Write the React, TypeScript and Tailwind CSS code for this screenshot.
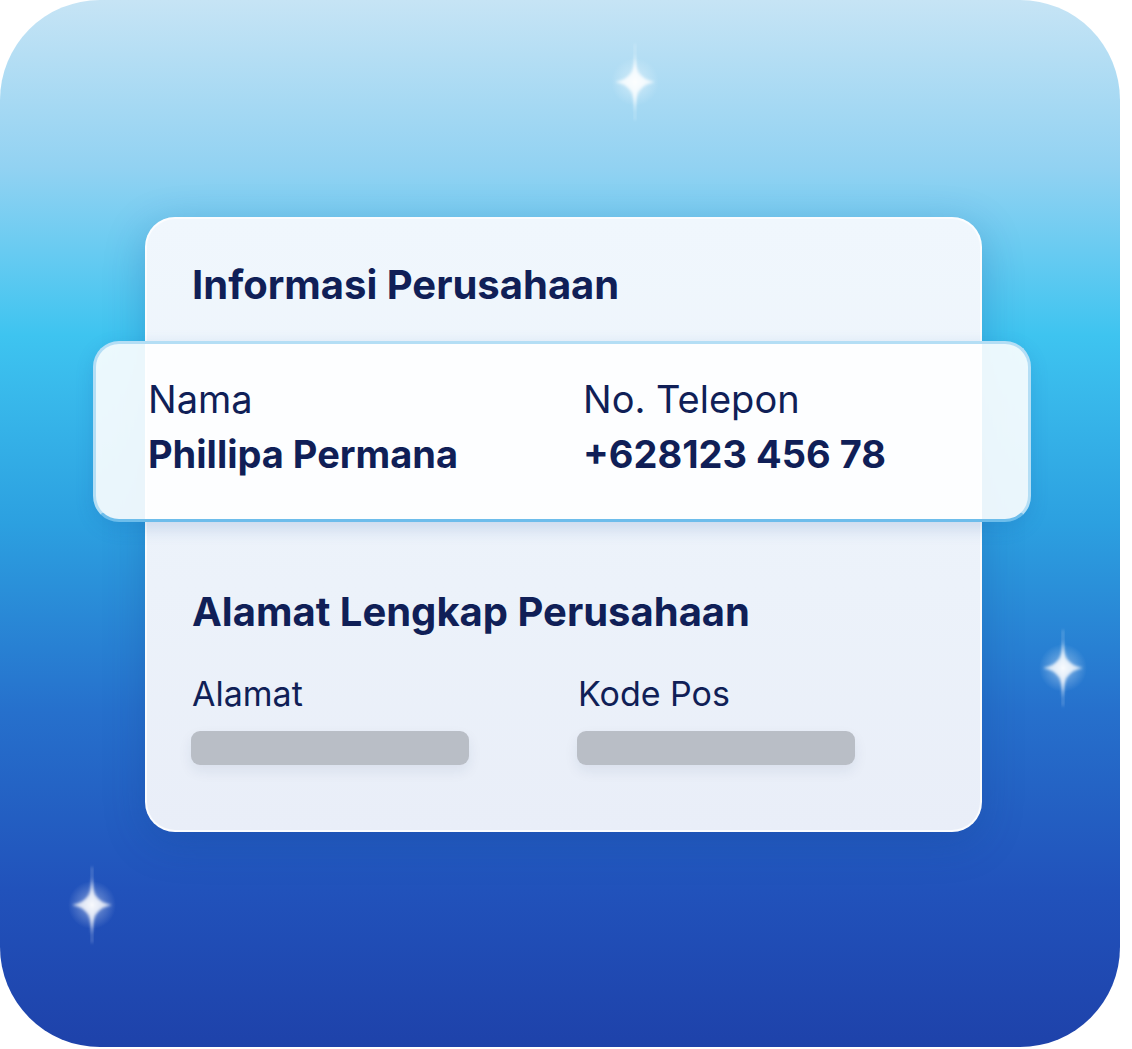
import React from 'react';

function Sparkle({ className, id }: { className: string; id: string }) {
  return (
    <svg className={className} width="80" height="100" viewBox="0 0 80 100" fill="none">
      <defs>
        <radialGradient id={`glow-${id}`} cx="50%" cy="50%" r="50%">
          <stop offset="0%" stopColor="#ffffff" stopOpacity="0.8" />
          <stop offset="45%" stopColor="#ffffff" stopOpacity="0.25" />
          <stop offset="100%" stopColor="#ffffff" stopOpacity="0" />
        </radialGradient>
        <filter id={`soft-${id}`} x="-20%" y="-20%" width="140%" height="140%">
          <feGaussianBlur stdDeviation="1.6" />
        </filter>
      </defs>
      <ellipse cx="40" cy="50" rx="24" ry="24" fill={`url(#glow-${id})`} />
      <rect x="39" y="12" width="2" height="76" fill="#ffffff" fillOpacity="0.25" filter={`url(#soft-${id})`} />
      <path
        d="M40 22 C41.5 40 43 46 60 50 C43 54 41.5 60 40 80 C38.5 60 37 54 20 50 C37 46 38.5 40 40 22 Z"
        fill="#ffffff"
        fillOpacity="0.8"
        filter={`url(#soft-${id})`}
      />
    </svg>
  );
}

export default function App() {
  const font = { fontFamily: 'Inter, "Noto Sans", sans-serif' };

  return (
    <div className="h-[1049px] w-[1132px] bg-white" style={font}>
      <div className="relative h-[1047px] w-[1120px] overflow-hidden rounded-[100px] bg-[linear-gradient(180deg,#c6e4f5_0%,#92d2f2_16%,#3ec4f0_32%,#2ca0e0_50%,#2670cc_68%,#2152bb_85%,#1e42aa_100%)] pl-[145px] pt-[217px]">
        <Sparkle id="a" className="absolute left-[595px] top-[32px]" />
        <Sparkle id="b" className="absolute left-[1023px] top-[618px]" />
        <Sparkle id="c" className="absolute left-[52px] top-[855px]" />

        <div className="relative h-[615px] w-[837px] rounded-[30px] border-2 border-white/80 bg-[linear-gradient(180deg,#f0f7fd_0%,#ecf2fa_60%,#e9eef8_100%)] shadow-[0_10px_40px_rgba(20,60,140,0.25)]">
          <h2 className="px-[45px] pt-[42px] text-[40px] font-bold leading-[48px] text-[#101f57]">
            Informasi Perusahaan
          </h2>

          <div className="-ml-[54px] -mr-[51px] mt-[32px] flex h-[181px] rounded-[26px] border-[3px] border-[#b4def5] border-b-[#6dbdeb] bg-white/90 pl-[52px] pt-[31px] shadow-[0_6px_18px_rgba(30,90,170,0.18)]">
            <div className="w-[435px]">
              <p className="text-[38px] leading-[48px] text-[#101f57]">Nama</p>
              <p className="mt-[7px] text-[38px] font-bold leading-[48px] text-[#101f57]">Phillipa Permana</p>
            </div>
            <div>
              <p className="text-[38px] leading-[48px] text-[#101f57]">No. Telepon</p>
              <p className="mt-[7px] text-[38px] font-bold leading-[48px] text-[#101f57]">+628123 456 78</p>
            </div>
          </div>

          <h2 className="px-[45px] pt-[66px] text-[40px] font-bold leading-[48px] text-[#101f57]">
            Alamat Lengkap Perusahaan
          </h2>

          <div className="flex px-[44px] pt-[36px]">
            <div className="w-[386px]">
              <p className="pl-[1px] text-[34px] leading-[44px] text-[#101f57]">Alamat</p>
              <div className="mt-[15px] h-[34px] w-[278px] rounded-[9px] bg-[#b9bec6] shadow-[0_6px_14px_rgba(30,50,90,0.08)]" />
            </div>
            <div>
              <p className="pl-[1px] text-[34px] leading-[44px] text-[#101f57]">Kode Pos</p>
              <div className="mt-[15px] h-[34px] w-[278px] rounded-[9px] bg-[#b9bec6] shadow-[0_6px_14px_rgba(30,50,90,0.08)]" />
            </div>
          </div>
        </div>
      </div>
    </div>
  );
}
